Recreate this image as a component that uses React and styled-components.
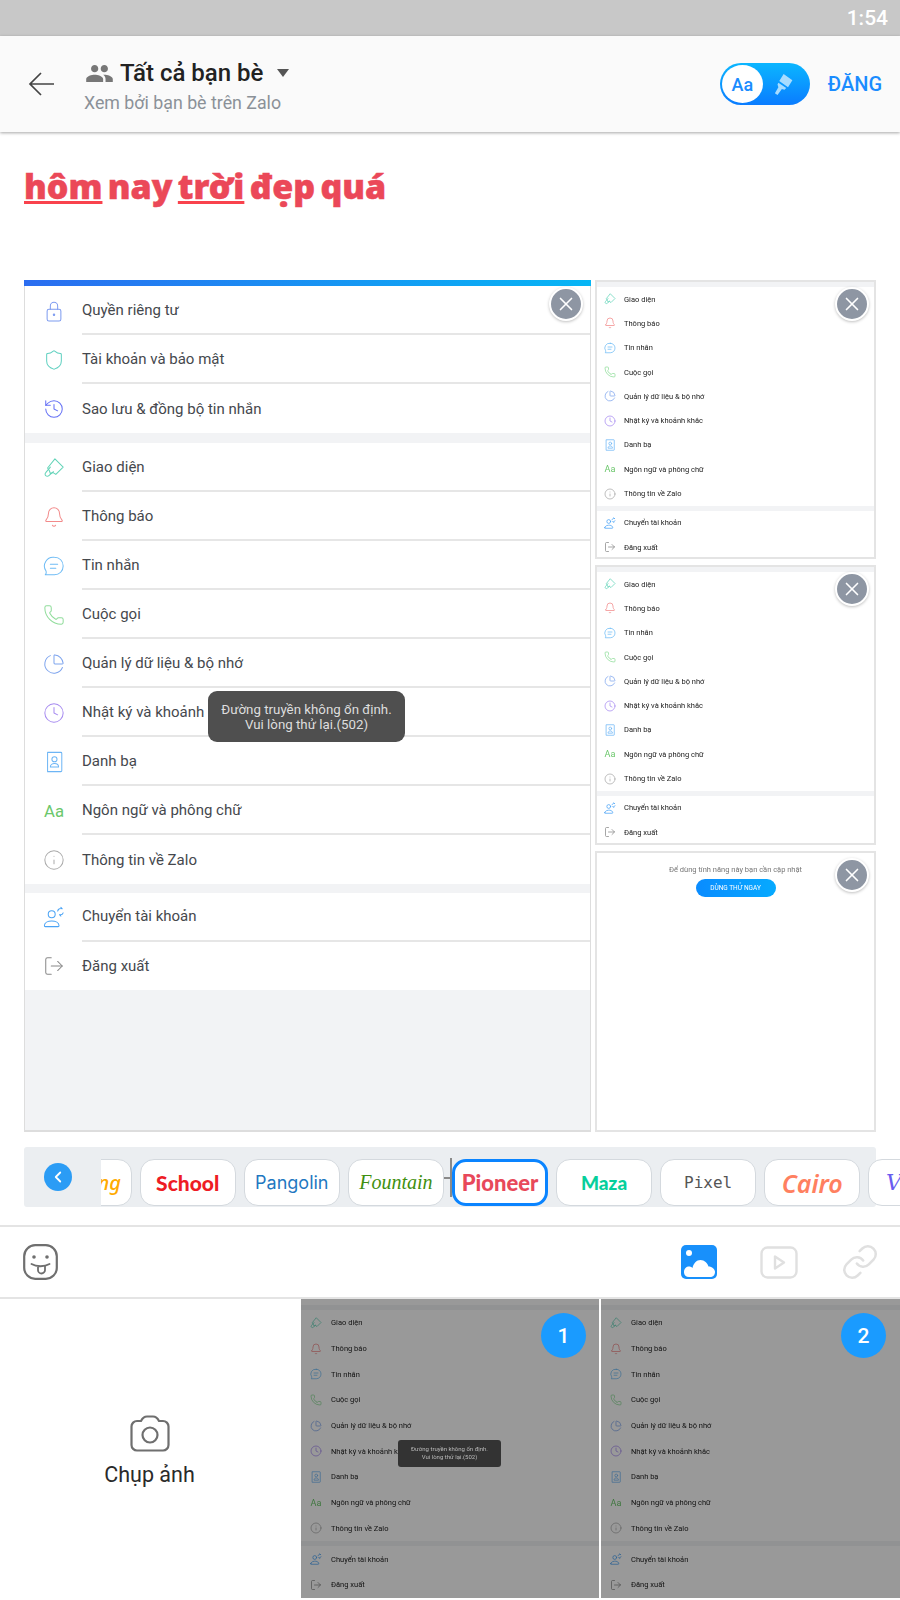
import React from "react";
import styled, { createGlobalStyle } from "styled-components";
import {
  Shield,
  History,
  Bell,
  Phone,
  ChartPie,
  Clock,
  Info,
  LogOut,
  ChevronLeft,
  Link as LinkIcon,
  X,
} from "lucide-react";

const GlobalStyle = createGlobalStyle`
  html, body {
    margin: 0;
    padding: 0;
    background: #fff;
  }
  * {
    box-sizing: border-box;
  }
`;

const Page = styled.div`
  width: 900px;
  height: 1600px;
  overflow: hidden;
  display: flex;
  flex-direction: column;
  font-family: Roboto, "Noto Sans", sans-serif;
  background: #fff;
`;

const StatusBar = styled.div`
  height: 36px;
  background: #c8c8c8;
  color: #fff;
  font-size: 21px;
  font-weight: 500;
  display: flex;
  align-items: center;
  justify-content: flex-end;
  padding-right: 12px;
`;

const Header = styled.div`
  height: 96px;
  background: #fafafa;
  box-shadow: 0 1px 3px rgba(0, 0, 0, 0.35);
  display: flex;
  align-items: center;
  padding: 0 18px 0 28px;
  position: relative;
`;

const HeaderText = styled.div`
  flex: 1;
  margin-left: 29px;
  padding-top: 2px;
  display: flex;
  flex-direction: column;
  gap: 3px;
`;

const AudienceRow = styled.div`
  display: flex;
  align-items: center;
  height: 32px;
  padding-left: 2px;
  color: #222;
  font-size: 24px;
  font-weight: 500;
`;

const AudienceCaret = styled.span`
  width: 0;
  height: 0;
  margin-left: 14px;
  border-left: 6px solid transparent;
  border-right: 6px solid transparent;
  border-top: 8px solid #555;
`;

const Subtitle = styled.div`
  color: #8b9198;
  font-size: 17.8px;
  padding-left: 1px;
`;

const StyleToggle = styled.div`
  width: 90px;
  height: 42px;
  border-radius: 21px;
  background: linear-gradient(180deg, #0bb6ff, #0a7cff);
  display: flex;
  align-items: center;
  padding-left: 2px;
`;

const ToggleKnob = styled.div`
  width: 41px;
  height: 38px;
  border-radius: 50%;
  background: #fff;
  color: #1a8cff;
  font-size: 18px;
  font-weight: 500;
  display: flex;
  align-items: center;
  justify-content: center;
`;

const ToggleBrush = styled.div`
  flex: 1;
  display: flex;
  justify-content: center;
  padding-right: 3px;
`;

const PostButton = styled.div`
  margin-left: 18px;
  color: #1a8cff;
  font-size: 20px;
  font-weight: 500;
`;

const Composer = styled.div`
  height: 148px;
  padding: 31px 24px 0;
`;

const PostText = styled.div`
  color: #eb4858;
  font-family: "Noto Sans", sans-serif;
  font-size: 34px;
  font-weight: 900;
  line-height: 46px;
  word-spacing: -3.5px;
  -webkit-text-stroke: 0.5px #eb4858;
`;

const Mis = styled.span`
  text-decoration: underline;
  text-decoration-color: #f9424d;
  text-decoration-thickness: 3px;
  text-underline-offset: 2px;
  text-decoration-skip-ink: none;
`;

const ImageGrid = styled.div`
  height: 852px;
  margin: 0 24px;
  display: grid;
  grid-template-columns: 567px 281px;
  grid-template-rows: 279px 280px 281px;
  column-gap: 4px;
  row-gap: 6px;
`;

const MainShot = styled.div`
  grid-row: 1 / span 3;
  position: relative;
  display: flex;
  flex-direction: column;
  background: #f2f3f5;
  border-left: 1px solid #ddd;
  border-right: 1px solid #ddd;
  border-bottom: 2px solid #ddd;
`;

const GradientBar = styled.div`
  height: 6px;
  margin: 0 -1px;
  background: linear-gradient(90deg, #2b6df0, #06b6f5);
`;

const Group = styled.div`
  background: #fff;
  margin-bottom: ${(p) => p.$gap}px;
`;

const Row = styled.div`
  height: ${(p) => p.$h}px;
  display: flex;
  align-items: center;
  padding-left: 17px;
`;

const IconCell = styled.div`
  width: 24px;
  height: 24px;
  flex: none;
  display: flex;
  align-items: center;
  justify-content: center;
`;

const RowLabel = styled.div`
  flex: 1;
  align-self: stretch;
  margin-left: 16px;
  display: flex;
  align-items: center;
  color: #45484d;
  font-size: 15px;
  border-bottom: ${(p) => (p.$last ? "none" : "2px solid #e6e6e6")};
`;

const AaMark = styled.span`
  color: ${(p) => p.$color};
  font-size: ${(p) => p.$size * 0.76}px;
`;

const Toast = styled.div`
  position: absolute;
  left: 183px;
  top: 411px;
  width: 197px;
  height: 51px;
  border-radius: 9px;
  background: #4f4f4f;
  color: #dedede;
  font-size: 13.3px;
  line-height: 15px;
  text-align: center;
  display: flex;
  align-items: center;
  justify-content: center;
`;

const CloseButton = styled.div`
  position: absolute;
  top: ${(p) => p.$top}px;
  right: ${(p) => p.$right}px;
  width: 34px;
  height: 34px;
  border-radius: 50%;
  background: #8e96a3;
  border: 2px solid #fff;
  box-shadow: 0 1px 3px rgba(0, 0, 0, 0.25);
  color: #fff;
  display: flex;
  align-items: center;
  justify-content: center;
`;

const MiniFrame = styled.div`
  position: relative;
  border: 2px solid #e4e4e4;
  background: #fff;
  overflow: hidden;
`;

const MiniBody = styled.div`
  height: 100%;
  display: flex;
  flex-direction: column;
  background: #f2f3f5;
  filter: ${(p) => (p.$dim ? "brightness(0.6) blur(0.65px)" : "blur(0.6px)")};
`;

const MiniTop = styled.div`
  height: ${(p) => p.$top}px;
  background: #fff;
  border-bottom: 5px solid #f2f3f5;
`;

const MiniGroup = styled.div`
  background: #fff;
  margin-bottom: ${(p) => p.$gap}px;
`;

const MiniRow = styled.div`
  height: ${(p) => p.$h}px;
  display: flex;
  align-items: center;
  padding-left: ${(p) => p.$pad}px;
`;

const MiniIcon = styled.div`
  width: 14px;
  flex: none;
  display: flex;
  justify-content: center;
`;

const MiniLabel = styled.div`
  margin-left: ${(p) => p.$gap}px;
  color: #222;
  font-size: 7.5px;
  white-space: nowrap;
`;

const PromoCard = styled.div`
  height: 100%;
  padding-top: 12px;
  display: flex;
  flex-direction: column;
  align-items: center;
  gap: 5px;
  filter: blur(0.5px);
`;

const PromoText = styled.div`
  color: #777;
  font-size: 7.5px;
`;

const PromoButton = styled.div`
  width: 80px;
  height: 18px;
  border-radius: 9px;
  background: linear-gradient(90deg, #0a8cff, #06aaff);
  color: #fff;
  font-size: 6.5px;
  display: flex;
  align-items: center;
  justify-content: center;
`;

const FontStrip = styled.div`
  position: relative;
  height: 60px;
  margin: 15px 0 0 24px;
  display: flex;
`;

const StripTrack = styled.div`
  position: absolute;
  left: 0;
  top: 0;
  bottom: 0;
  width: 852px;
  background: #ebeef1;
  border-radius: 3px;
`;

const StripBack = styled.div`
  position: relative;
  width: 77px;
  flex: none;
  display: flex;
  align-items: center;
  padding: 0 0 0 20px;
`;

const BackCircle = styled.div`
  width: 28px;
  height: 28px;
  border-radius: 50%;
  background: #2b9cf5;
  color: #fff;
  display: flex;
  align-items: center;
  justify-content: center;
`;

const ChipScroller = styled.div`
  position: relative;
  flex: 1;
  overflow: hidden;
  display: flex;
  gap: 8.1px;
  padding-top: 12px;
  align-items: flex-start;
`;

const Chip = styled.div`
  width: 96px;
  height: 47px;
  flex: none;
  border-radius: 14px;
  background: #fff;
  border: ${(p) => (p.$active ? "3px solid #0a84ff" : "1px solid #d4d9de")};
  display: flex;
  align-items: center;
  justify-content: center;
  color: ${(p) => p.$color};
  font-family: ${(p) => p.$font};
  font-size: ${(p) => p.$size}px;
  font-weight: ${(p) => p.$weight};
  font-style: ${(p) => (p.$italic ? "italic" : "normal")};
  white-space: nowrap;
  margin-left: ${(p) => p.$shift || 0}px;
`;

const CaretLine = styled.div`
  position: absolute;
  left: 426px;
  top: 11px;
  width: 2px;
  height: 39px;
  background: #8a8a8a;
`;

const CaretStub = styled.div`
  position: absolute;
  left: 420px;
  top: 30px;
  width: 6px;
  height: 2px;
  background: #8a8a8a;
`;

const Toolbar = styled.div`
  height: 74px;
  margin-top: 18px;
  border-top: 2px solid #e4e4e4;
  border-bottom: 2px solid #e4e4e4;
  display: flex;
  align-items: center;
  justify-content: space-between;
  padding: 0 21px 0 23px;
`;

const ToolGroup = styled.div`
  display: flex;
  align-items: center;
  gap: 43px;
`;

const Gallery = styled.div`
  flex: 1;
  display: grid;
  grid-template-columns: 299px 298px 299px;
  column-gap: 2px;
  padding-bottom: 2px;
`;

const CameraCell = styled.div`
  display: flex;
  flex-direction: column;
  align-items: center;
  justify-content: center;
  gap: 10px;
  padding-top: 4px;
  color: #2a2a2a;
  font-size: 21.5px;
`;

const GalleryThumb = styled.div`
  position: relative;
  overflow: hidden;
  background: #999;
`;

const GalleryToast = styled.div`
  position: absolute;
  left: 97px;
  top: 141px;
  width: 103px;
  height: 27px;
  border-radius: 3px;
  background: #333;
  color: #bbb;
  font-size: 6px;
  line-height: 8px;
  text-align: center;
  padding-top: 5px;
  filter: blur(0.5px);
`;

const Badge = styled.div`
  position: absolute;
  top: 14px;
  right: ${(p) => p.$right}px;
  width: 45px;
  height: 45px;
  border-radius: 50%;
  background: #1a9bff;
  color: #fff;
  font-size: 21px;
  font-weight: 500;
  display: flex;
  align-items: center;
  justify-content: center;
`;

const line = (color, size, strokeWidth) => ({
  width: size,
  height: size,
  viewBox: "0 0 24 24",
  fill: "none",
  stroke: color,
  strokeWidth,
  strokeLinecap: "round",
  strokeLinejoin: "round",
});

const LockIcon = ({ color, size, strokeWidth }) => (
  <svg {...line(color, size, strokeWidth)}>
    <path d="M8 10V6.500a4 4 0 0 1 8 0V10" />
    <rect x="4.500" y="10" width="15" height="13" rx="2" />
    <circle cx="12" cy="16" r="0.8" fill={color} />
  </svg>
);

const BrushIcon = ({ color, size, strokeWidth }) => (
  <svg {...line(color, size, strokeWidth)}>
    <path d="M13 2l9 9-8 8-3-2-3 1-1-3-2-3z" />
    <path d="M8 11l-5 6a2.400 2.400 0 0 0 3.400 3.400l5-4.400" />
  </svg>
);

const ChatIcon = ({ color, size, strokeWidth }) => (
  <svg {...line(color, size, strokeWidth)}>
    <path d="M12.500 2.500c5.500 0 9.500 4 9.500 9.500s-4 9.500-9.500 9.500H2.500c1-1 1.200-2.500.8-4A9.600 9.600 0 0 1 12.500 2.500z" />
    <path d="M8 10h8M8 14.500h6" />
  </svg>
);

const ContactsIcon = ({ color, size, strokeWidth }) => (
  <svg {...line(color, size, strokeWidth)}>
    <path d="M5 1.500h14.500a1 1 0 0 1 1 1v19a1 1 0 0 1-1 1H5z" />
    <circle cx="12.500" cy="9" r="2.800" />
    <path d="M8 17.500c0-5 9-5 9 0z" />
  </svg>
);

const SwitchAccountIcon = ({ color, size, strokeWidth }) => (
  <svg {...line(color, size, strokeWidth)}>
    <circle cx="9.500" cy="9" r="3.800" />
    <path d="M1.500 21.500c0-7 16-7 16 0 0 .6-.4 1-1 1h-14c-.6 0-1-.4-1-1z" />
    <path d="M16 5.500c.5-2 2.500-3 5-2.500M21 3l-1.500-1.500M22 7.500c-.5 1.500-2 2.500-4 2M18 9.500l1.500 1.500" />
  </svg>
);

const PeopleIcon = () => (
  <svg width="29" height="29" viewBox="0 0 24 24" fill="#777">
    <path d="M16 11c1.660 0 2.990-1.340 2.990-3S17.660 5 16 5c-1.660 0-3 1.340-3 3s1.340 3 3 3zm-8 0c1.660 0 2.990-1.340 2.990-3S9.660 5 8 5C6.340 5 5 6.340 5 8s1.340 3 3 3zm0 2c-2.330 0-7 1.170-7 3.500V19h14v-2.500c0-2.330-4.670-3.500-7-3.500zm8 0c-.29 0-.62.02-.97.05 1.160.84 1.970 1.970 1.970 3.450V19h6v-2.500c0-2.330-4.670-3.500-7-3.500z" />
  </svg>
);

const BackArrow = () => (
  <svg width="26" height="24" viewBox="0 0 26 24" fill="none" stroke="#444" strokeWidth="1.700">
    <path d="M26 12H2M13 1L2 12l11 11" />
  </svg>
);

const ToggleBrushIcon = () => (
  <svg width="21" height="23" viewBox="0 0 24 26" fill="#a8dcff">
    <path d="M11 1l10 7-5 8-10-7zM5 11l9 6-2 2-3-1-5 7-3-2 4-7-1-3z" />
  </svg>
);

const EmojiIcon = () => (
  <svg width="35" height="36" viewBox="0 0 35 36" fill="none" stroke="#6f6f6f" strokeWidth="2.200" strokeLinecap="round">
    <rect x="1.200" y="1.200" width="32.600" height="33.600" rx="11" />
    <circle cx="11" cy="13" r="1.800" fill="#6f6f6f" stroke="none" />
    <circle cx="24" cy="13" r="1.800" fill="#6f6f6f" stroke="none" />
    <path d="M8.500 20c5 3 13 3 18 0M15 22.500v3.500a3.500 3.500 0 0 0 7 0v-4" strokeWidth="1.800" />
  </svg>
);

const PhotoIcon = () => (
  <svg width="36" height="34" viewBox="0 0 36 34">
    <rect width="36" height="34" rx="5" fill="#1890fb" />
    <circle cx="8" cy="8" r="3" fill="#fff" />
    <path d="M3 27c0-3.500 2.500-5.500 5-5.500 1.500 0 2.500.5 3.500 1.500 1-4.500 4-8 8-8s7 3 8 6.500c3.500 0 6.500 2.500 6.500 5.500 0 3-2 5-5 5H8c-3 0-5-2-5-4.500z" fill="#fff" />
  </svg>
);

const VideoIcon = () => (
  <svg width="38" height="33" viewBox="0 0 38 33" fill="none" stroke="#e0e0e0" strokeWidth="2.400" strokeLinejoin="round">
    <rect x="1.500" y="1.500" width="35" height="30" rx="6" />
    <path d="M15 10.500v12l9-6z" />
  </svg>
);

const CameraIcon = () => (
  <svg width="40" height="37" viewBox="0 0 40 37" fill="none" stroke="#6f6f6f" strokeWidth="2.200" strokeLinejoin="round">
    <path d="M7 6h4c1.500-3 3.500-4.500 6-4.500h6c2.500 0 4.500 1.500 6 4.500h4c3 0 5.500 2.500 5.500 5.500v18.500c0 3-2.500 5.500-5.500 5.500H7c-3 0-5.500-2.500-5.500-5.500V11.500C1.500 8.500 4 6 7 6z" />
    <circle cx="20" cy="20" r="7.500" />
  </svg>
);

const Aa = ({ color, size }) => (
  <AaMark $color={color} $size={size}>
    Aa
  </AaMark>
);

const privacyRows = [
  { label: "Quyền riêng tư", Icon: LockIcon, color: "#7d9bf0" },
  { label: "Tài khoản và bảo mật", Icon: Shield, color: "#5fd0c0" },
  { label: "Sao lưu & đồng bộ tin nhắn", Icon: History, color: "#6470f5" },
];

const appRows = [
  { label: "Giao diện", Icon: BrushIcon, color: "#63d4b8" },
  { label: "Thông báo", Icon: Bell, color: "#f28a8a" },
  { label: "Tin nhắn", Icon: ChatIcon, color: "#6fbcf5" },
  { label: "Cuộc gọi", Icon: Phone, color: "#8fdc9a" },
  { label: "Quản lý dữ liệu & bộ nhớ", Icon: ChartPie, color: "#7fa5ee" },
  { label: "Nhật ký và khoảnh khắc", Icon: Clock, color: "#a78bf0" },
  { label: "Danh bạ", Icon: ContactsIcon, color: "#6db5f5" },
  { label: "Ngôn ngữ và phông chữ", Icon: Aa, color: "#6cc76c" },
  { label: "Thông tin về Zalo", Icon: Info, color: "#aaaaaa" },
];

const accountRows = [
  { label: "Chuyển tài khoản", Icon: SwitchAccountIcon, color: "#4aa3f5" },
  { label: "Đăng xuất", Icon: LogOut, color: "#888888" },
];

const chips = [
  { label: "School", color: "#ee1c25", font: "Lato, sans-serif", size: 21, weight: 900 },
  { label: "Pangolin", color: "#1f78c1", font: "Inter, sans-serif", size: 18, weight: 400 },
  { label: "Fountain", color: "#3f8f10", font: '"Liberation Serif", serif', size: 20, weight: 400, italic: true },
  { label: "Pioneer", color: "#e8485a", font: "Lato, sans-serif", size: 22, weight: 900, active: true },
  { label: "Maza", color: "#06cf9c", font: "Lato, sans-serif", size: 19, weight: 900 },
  { label: "Pixel", color: "#555", font: '"DejaVu Sans Mono", monospace', size: 16, weight: 400 },
  { label: "Cairo", color: "#ff8060", font: '"Noto Sans", sans-serif', size: 25, weight: 600, italic: true },
  { label: "Vibes", color: "#6a5cf0", font: '"DejaVu Serif", serif', size: 22, weight: 400, italic: true },
];

const SettingsGroup = ({ rows, gap, rowH = 49 }) => (
  <Group $gap={gap}>
    {rows.map(({ label, Icon, color }, i) => (
      <Row key={label} $h={rowH}>
        <IconCell>
          <Icon color={color} size={22} strokeWidth={1.1} />
        </IconCell>
        <RowLabel $last={i === rows.length - 1}>{label}</RowLabel>
      </Row>
    ))}
  </Group>
);

const MiniGroupRows = ({ rows, gap, rowH, pad, labelGap }) => (
  <MiniGroup $gap={gap}>
    {rows.map(({ label, Icon, color }) => (
      <MiniRow key={label} $h={rowH} $pad={pad}>
        <MiniIcon>
          <Icon color={color} size={12} strokeWidth={1.5} />
        </MiniIcon>
        <MiniLabel $gap={labelGap}>{label}</MiniLabel>
      </MiniRow>
    ))}
  </MiniGroup>
);

const MiniSettings = ({ top, rowH, pad, labelGap, dim }) => (
  <MiniBody $dim={dim}>
    <MiniTop $top={top} />
    <MiniGroupRows rows={appRows} gap={5} rowH={rowH} pad={pad} labelGap={labelGap} />
    <MiniGroupRows rows={accountRows} gap={0} rowH={rowH} pad={pad} labelGap={labelGap} />
  </MiniBody>
);

const Close = ({ top, right }) => (
  <CloseButton $top={top} $right={right}>
    <X size={22} strokeWidth={1.8} />
  </CloseButton>
);

const App = () => {
  return (
    <Page>
      <GlobalStyle />
      <StatusBar>1:54</StatusBar>

      <Header>
        <BackArrow />
        <HeaderText>
          <AudienceRow>
            <PeopleIcon />
            &nbsp;Tất cả bạn bè
            <AudienceCaret />
          </AudienceRow>
          <Subtitle>Xem bởi bạn bè trên Zalo</Subtitle>
        </HeaderText>
        <StyleToggle>
          <ToggleKnob>Aa</ToggleKnob>
          <ToggleBrush>
            <ToggleBrushIcon />
          </ToggleBrush>
        </StyleToggle>
        <PostButton>ĐĂNG</PostButton>
      </Header>

      <Composer>
        <PostText>
          <Mis>hôm</Mis> nay <Mis>trời</Mis> đẹp quá
        </PostText>
      </Composer>

      <ImageGrid>
        <MainShot>
          <GradientBar />
          <SettingsGroup rows={privacyRows} gap={10} />
          <SettingsGroup rows={appRows} gap={9} />
          <SettingsGroup rows={accountRows} gap={0} rowH={48.5} />
          <Toast>
            Đường truyền không ổn định.
            <br />
            Vui lòng thử lại.(502)
          </Toast>
          <Close top={7} right={7} />
        </MainShot>

        <MiniFrame>
          <MiniSettings top={7} rowH={24.3} pad={6} labelGap={7} />
          <Close top={5} right={5} />
        </MiniFrame>
        <MiniFrame>
          <MiniSettings top={7} rowH={24.3} pad={6} labelGap={7} />
          <Close top={5} right={5} />
        </MiniFrame>
        <MiniFrame>
          <PromoCard>
            <PromoText>Để dùng tính năng này bạn cần cập nhật</PromoText>
            <PromoButton>DÙNG THỬ NGAY</PromoButton>
          </PromoCard>
          <Close top={5} right={5} />
        </MiniFrame>
      </ImageGrid>

      <FontStrip>
        <StripTrack />
        <StripBack>
          <BackCircle>
            <ChevronLeft size={18} strokeWidth={2.4} />
          </BackCircle>
        </StripBack>
        <ChipScroller>
          <Chip $color="#ffaa00" $font='"Noto Sans", sans-serif' $size={20} $weight={500} $italic $shift={-65.4}>
            Dancing
          </Chip>
          {chips.map((c) => (
            <Chip
              key={c.label}
              $active={c.active}
              $color={c.color}
              $font={c.font}
              $size={c.size}
              $weight={c.weight}
              $italic={c.italic}
            >
              {c.label}
            </Chip>
          ))}
        </ChipScroller>
        <CaretStub />
        <CaretLine />
      </FontStrip>

      <Toolbar>
        <EmojiIcon />
        <ToolGroup>
          <PhotoIcon />
          <VideoIcon />
          <LinkIcon size={38} color="#e0e0e0" strokeWidth={1.6} />
        </ToolGroup>
      </Toolbar>

      <Gallery>
        <CameraCell>
          <CameraIcon />
          Chụp ảnh
        </CameraCell>
        <GalleryThumb>
          <MiniSettings top={11} rowH={25.7} pad={8} labelGap={8} dim />
          <GalleryToast>
            Đường truyền không ổn định.
            <br />
            Vui lòng thử lại.(502)
          </GalleryToast>
          <Badge $right={13}>1</Badge>
        </GalleryThumb>
        <GalleryThumb>
          <MiniSettings top={11} rowH={25.7} pad={8} labelGap={8} dim />
          <Badge $right={14}>2</Badge>
        </GalleryThumb>
      </Gallery>
    </Page>
  );
};

export default App;
